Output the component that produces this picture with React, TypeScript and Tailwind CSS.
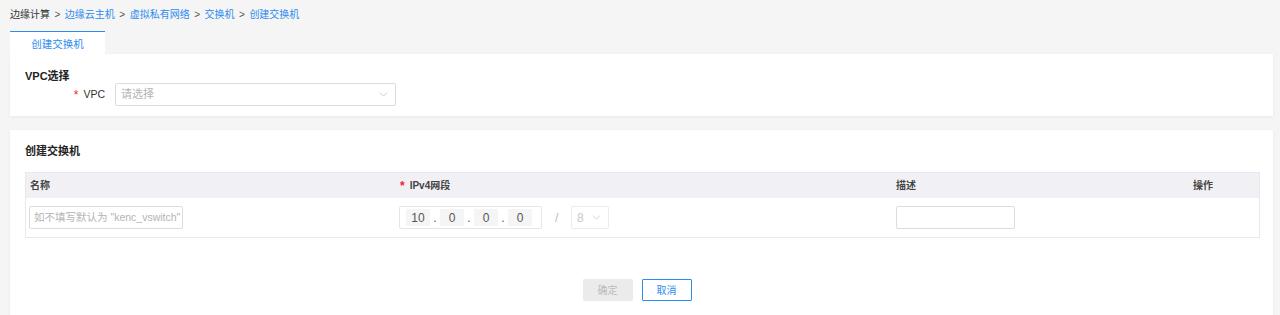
import { ChevronDown } from "lucide-react";

const font = "font-['Liberation_Sans','Noto_Sans_CJK_SC',sans-serif]";

const crumbs = ["边缘云主机", "虚拟私有网络", "交换机", "创建交换机"];

const Star = () => <span className="text-[#f5222d] mr-[5px] text-[12px]">*</span>;

const IpCell = ({ v }: { v: string }) => (
  <div className="w-[24px] h-[17px] bg-[#f5f5f5] flex items-center justify-center text-[12px] text-[#555]">{v}</div>
);

const App = () => {
  return (
    <div className={`${font} w-[1280px] h-[315px] bg-[#f5f5f5] text-[#333] text-[12px] overflow-hidden`}>
      <div className="flex items-center gap-[4.5px] px-[10px] pt-[6px] h-[22px] text-[10px]">
        <span className="text-[#333]">边缘计算</span>
        {crumbs.map((c) => (
          <span key={c} className="flex items-center gap-[4.5px]">
            <span className="text-[#555]">&gt;</span>
            <span className="text-[#2d8cf0]">{c}</span>
          </span>
        ))}
      </div>

      <div className="pl-[10px] mt-[9px]">
        <div className="w-[95px] h-[23px] bg-white border-t border-[#2d8cf0] flex items-center justify-center text-[#2d8cf0] pt-[3px] text-[10.5px]">
          创建交换机
        </div>
      </div>

      <div className="mx-[10px] mr-[7px] bg-white h-[62px] px-[15px] pt-[15px] shadow-[0_1px_3px_rgba(0,0,0,0.05)]">
        <div className="font-bold text-[#222] leading-[14px] text-[11px]">VPC选择</div>
        <div className="flex items-center">
          <div className="w-[90px] flex justify-end items-center pr-[10px] text-[#333] text-[10.5px]">
            <Star />VPC
          </div>
          <div className="w-[281px] h-[23px] border border-[#dcdcdc] rounded-[2px] flex items-center justify-between px-[5px] text-[#b4b4b4] text-[11px]">
            <span>请选择</span>
            <ChevronDown className="w-[13px] h-[13px] text-[#b0b0b0]" strokeWidth={1.2} />
          </div>
        </div>
      </div>

      <div className="mx-[10px] mr-[7px] mt-[14px] bg-white h-[200px] px-[15px] pt-[14px] shadow-[0_1px_3px_rgba(0,0,0,0.05)]">
        <div className="font-bold text-[#222] leading-[14px] text-[11px]">创建交换机</div>
        <div className="mt-[14px] w-[1235px] border border-[#e8e8ee]">
          <div className="flex items-center h-[25px] bg-[#f1f1f5] font-bold text-[10px] text-[#444]">
            <div className="w-[370px] pl-[4px]">名称</div>
            <div className="w-[498px] pl-[4px] flex items-center"><Star />IPv4网段</div>
            <div className="w-[297px] pl-[2px]">描述</div>
            <div className="flex-1 pl-[2px]">操作</div>
          </div>
          <div className="flex items-center h-[39px]">
            <div className="w-[370px] pl-[3px]">
              <div className="w-[154px] h-[23px] border border-[#dcdcdc] rounded-[2px] flex items-center px-[4px] text-[#b4b4b4] whitespace-nowrap overflow-hidden text-[10.5px]">
                如不填写默认为 "kenc_vswitch"
              </div>
            </div>
            <div className="w-[498px] pl-[3px] flex items-center">
              <div className="w-[143px] h-[23px] border border-[#e6e6e6] rounded-[2px] flex items-center px-[6px]">
                <IpCell v="10" />
                <span className="w-[10px] text-center text-[#555]">.</span>
                <IpCell v="0" />
                <span className="w-[10px] text-center text-[#555]">.</span>
                <IpCell v="0" />
                <span className="w-[10px] text-center text-[#555]">.</span>
                <IpCell v="0" />
              </div>
              <span className="ml-[13px] w-[16px] text-[#bbb]">/</span>
              <div className="w-[38px] h-[23px] border border-[#ececec] rounded-[2px] flex items-center justify-between px-[5px] text-[#c8c8c8]">
                <span>8</span>
                <ChevronDown className="w-[13px] h-[13px] text-[#bbb]" strokeWidth={1.2} />
              </div>
            </div>
            <div className="w-[297px] pl-[2px]">
              <div className="w-[119px] h-[23px] border border-[#dcdcdc] rounded-[2px]" />
            </div>
            <div className="flex-1" />
          </div>
        </div>
        <div className="flex justify-center gap-[9px] mt-[41px] pr-[9px]">
          <div className="w-[50px] h-[22px] bg-[#ebebeb] text-[#bbb] flex items-center justify-center rounded-[1px] text-[10px]">确定</div>
          <div className="w-[50px] h-[22px] border border-[#2d8cf0] text-[#2d8cf0] flex items-center justify-center rounded-[1px] text-[10px]">取消</div>
        </div>
      </div>
    </div>
  );
};

export default App;
